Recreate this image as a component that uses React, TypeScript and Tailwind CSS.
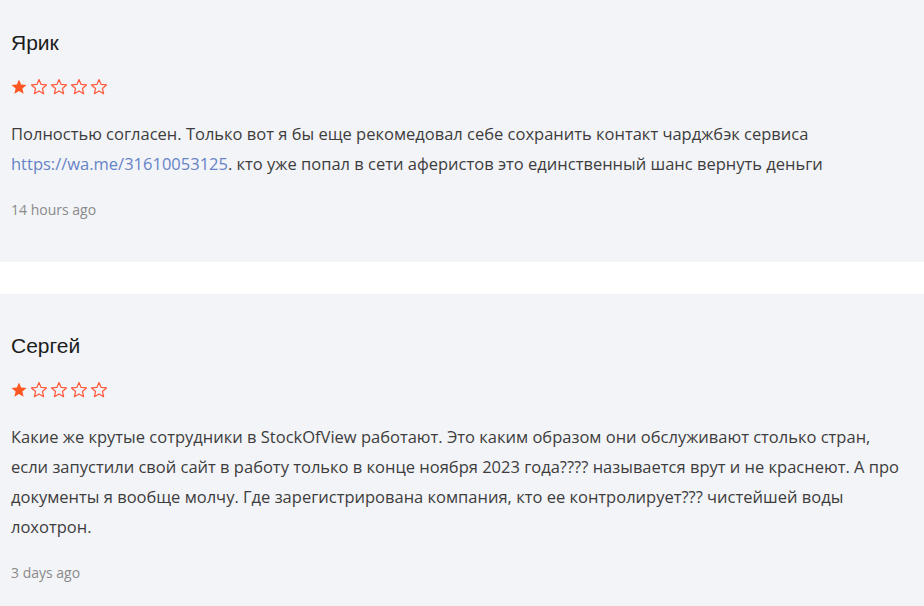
import React from 'react'

interface Review {
  name: string;
  rating: number;
  time: string;
  body: React.ReactNode;
}

const STAR = 'M12 17.27L18.18 21l-1.64-7.03L22 9.24l-7.19-.61L12 2 9.19 8.63 2 9.24l5.46 4.73L5.82 21z'

const Star = ({ filled }: { filled: boolean }) => (
  <svg viewBox='0 0 24 24' className='h-[18px] w-[18px]'>
    {filled ? (
      <path d={STAR} fill='#ff5722' />
    ) : (
      <path d={STAR} fill='none' stroke='#ff5a3c' strokeWidth='1.6' strokeLinejoin='round' />
    )}
  </svg>
)

const reviews: Review[] = [
  {
    name: 'Ярик',
    rating: 1,
    time: '14 hours ago',
    body: (
      <>
        Полностью согласен. Только вот я бы еще рекомедовал себе сохранить контакт чарджбэк сервиса{' '}
        <a href='#' className='text-[#6583c6]'>https://wa.me/31610053125</a>. кто уже попал в сети аферистов это единственный шанс вернуть деньги
      </>
    ),
  },
  {
    name: 'Сергей',
    rating: 1,
    time: '3 days ago',
    body: 'Какие же крутые сотрудники в StockOfView работают. Это каким образом они обслуживают столько стран, если запустили свой сайт в работу только в конце ноября 2023 года???? называется врут и не краснеют. А про документы я вообще молчу. Где зарегистрирована компания, кто ее контролирует??? чистейшей воды лохотрон.',
  },
]

const ReviewCard = ({ review }: { review: Review }) => {
  return (
    <div className='bg-[#f3f4f8] px-[11px] pt-[38px] pb-[42px]'>
      <h3 className="text-[21px] leading-[28px] text-[#1c1c1c] font-['Liberation_Sans',Arial,sans-serif]">{review.name}</h3>
      <div className='flex items-center gap-[2px] mt-[21px] -ml-[1px]'>
        {[1, 2, 3, 4, 5].map((i) => (
          <Star key={i} filled={i <= review.rating} />
        ))}
      </div>
      <p className="mt-[23px] pr-[6px] text-[16.5px] leading-[30px] text-[#3d3d3d] font-['Open_Sans',sans-serif]">
        {review.body}
      </p>
      <div className="mt-[21px] text-[14px] leading-[20px] text-[#8a8a8a] font-['Open_Sans',sans-serif]">{review.time}</div>
    </div>
  )
}

export default function App() {
  return (
    <div className='w-[924px] h-[606px] overflow-hidden bg-white'>
      <div className='flex flex-col gap-[32px] -mt-[9px]'>
        {reviews.map((r, i) => (
          <ReviewCard key={i} review={r} />
        ))}
      </div>
    </div>
  )
}
